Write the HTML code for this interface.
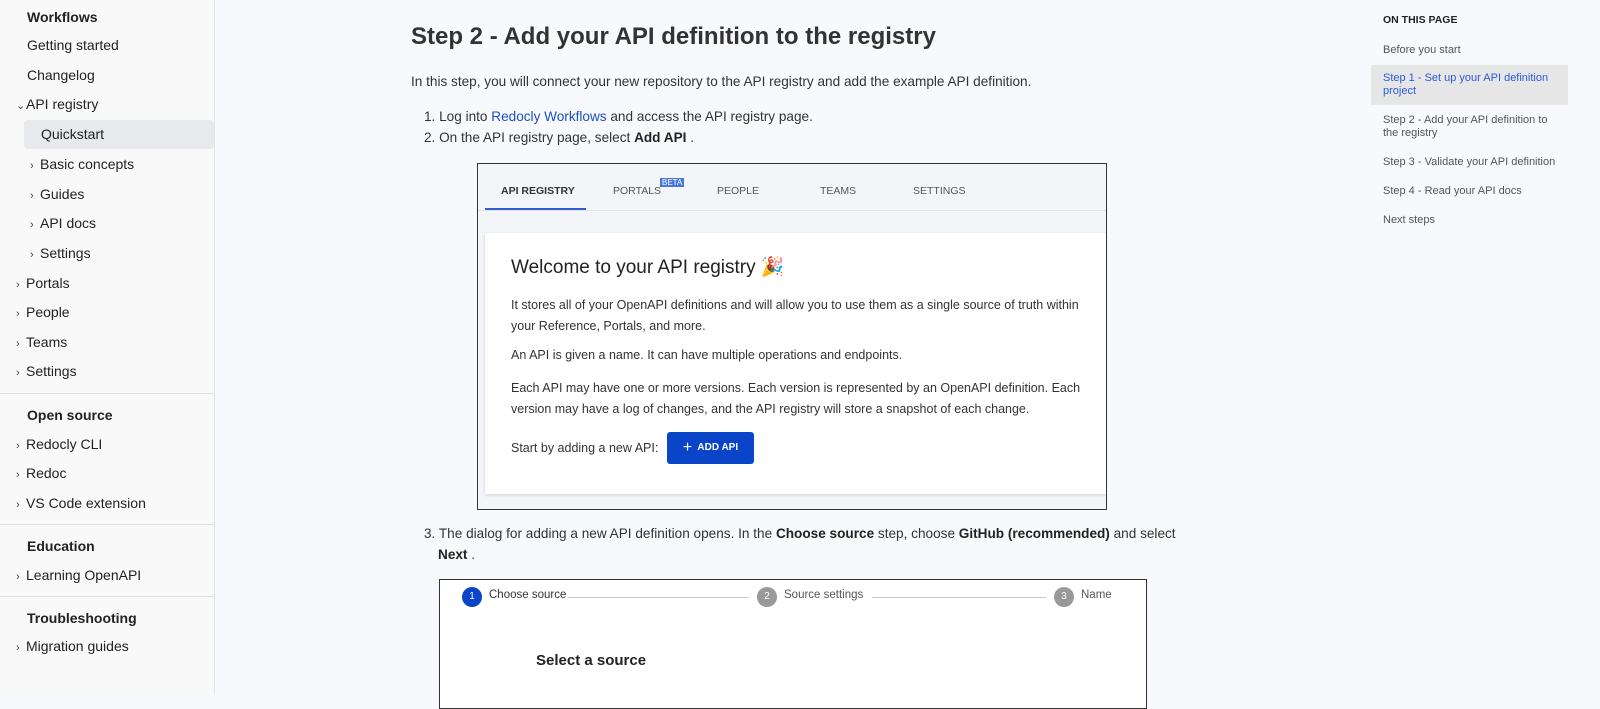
<!DOCTYPE html>
<html><head><meta charset="utf-8"><style>
*{margin:0;padding:0;box-sizing:border-box}
body{width:1600px;height:695px;overflow:hidden;background:#f8f9fc;font-family:"Liberation Sans",sans-serif;color:#1f1f1f;position:relative}
.side{position:absolute;left:0;top:0;width:215px;height:695px;background:#f9f9f9;border-right:1px solid #e4e4e4}
.side div{position:absolute;font-size:14px;color:#222;white-space:nowrap}
.side .h{font-weight:bold;left:27px}
.side .hr{position:absolute;left:0;width:214px;height:1px;background:#e0e0e0}
.ch{font-size:11px;color:#444;display:inline-block;width:10px}
.a{position:absolute;white-space:nowrap;font-size:13.6px;color:#333}
b{color:#222}
.toc div{position:absolute;left:1383px;font-size:11px;color:#555;line-height:13px}
</style></head><body>
<div class="side">
<div class="h" style="top:9px">Workflows</div>
<div style="left:27px;top:37px">Getting started</div>
<div style="left:27px;top:67px">Changelog</div>
<div style="left:16px;top:96px"><span class="ch">⌄</span>API registry</div>
<div style="left:24px;top:120px;width:190px;height:29px;background:#e8e9ec;border-radius:4px"></div>
<div style="left:41px;top:126px">Quickstart</div>
<div style="left:30px;top:156px"><span class="ch">›</span>Basic concepts</div>
<div style="left:30px;top:186px"><span class="ch">›</span>Guides</div>
<div style="left:30px;top:215px"><span class="ch">›</span>API docs</div>
<div style="left:30px;top:245px"><span class="ch">›</span>Settings</div>
<div style="left:16px;top:275px"><span class="ch">›</span>Portals</div>
<div style="left:16px;top:304px"><span class="ch">›</span>People</div>
<div style="left:16px;top:334px"><span class="ch">›</span>Teams</div>
<div style="left:16px;top:363px"><span class="ch">›</span>Settings</div>
<div class="hr" style="top:393px"></div>
<div class="h" style="top:407px">Open source</div>
<div style="left:16px;top:436px"><span class="ch">›</span>Redocly CLI</div>
<div style="left:16px;top:465px"><span class="ch">›</span>Redoc</div>
<div style="left:16px;top:495px"><span class="ch">›</span>VS Code extension</div>
<div class="hr" style="top:524px"></div>
<div class="h" style="top:538px">Education</div>
<div style="left:16px;top:567px"><span class="ch">›</span>Learning OpenAPI</div>
<div class="hr" style="top:596px"></div>
<div class="h" style="top:610px">Troubleshooting</div>
<div style="left:16px;top:638px"><span class="ch">›</span>Migration guides</div>
</div>

<div class="a" style="left:411px;top:23px;font-size:24px;font-weight:bold;color:#333">Step 2 - Add your API definition to the registry</div>
<div class="a" style="left:411px;top:74px">In this step, you will connect your new repository to the API registry and add the example API definition.</div>
<div class="a" style="left:424px;top:109px">1. Log into <span style="color:#1a4fc4">Redocly Workflows</span> and access the API registry page.</div>
<div class="a" style="left:424px;top:130px">2. On the API registry page, select <b>Add API</b> .</div>

<div style="position:absolute;left:477px;top:163px;width:630px;height:347px;border:1px solid #333;background:#f4f5f8;overflow:hidden">
 <div style="position:absolute;left:0;top:46px;width:630px;height:1px;background:#e2e4e8"></div>
 <div style="position:absolute;left:7px;top:44px;width:101px;height:2px;background:#2f5fd0"></div>
 <div style="position:absolute;top:21px;left:23px;font-size:10.5px;font-weight:bold;color:#333">API REGISTRY</div>
 <div style="position:absolute;top:21px;left:135px;font-size:10.5px;color:#555">PORTALS</div>
 <div style="position:absolute;top:14px;left:182px;font-size:8px;color:#fff;background:#4a78d8;padding:0 2px">BETA</div>
 <div style="position:absolute;top:21px;left:239px;font-size:10.5px;color:#555">PEOPLE</div>
 <div style="position:absolute;top:21px;left:342px;font-size:10.5px;color:#555">TEAMS</div>
 <div style="position:absolute;top:21px;left:435px;font-size:10.5px;color:#555">SETTINGS</div>
 <div style="position:absolute;left:7px;top:69px;width:622px;height:261px;background:#fff;box-shadow:0 1px 3px rgba(0,0,0,.15)">
  <div style="position:absolute;left:26px;top:22px;font-size:19px;color:#222">Welcome to your API registry 🎉</div>
  <div style="position:absolute;left:26px;top:62px;width:590px;font-size:12.5px;line-height:21px;color:#333">It stores all of your OpenAPI definitions and will allow you to use them as a single source of truth within your Reference, Portals, and more.</div>
  <div style="position:absolute;left:26px;top:115px;font-size:12.5px;color:#333">An API is given a name. It can have multiple operations and endpoints.</div>
  <div style="position:absolute;left:26px;top:145px;width:590px;font-size:12.5px;line-height:21px;color:#333">Each API may have one or more versions. Each version is represented by an OpenAPI definition. Each version may have a log of changes, and the API registry will store a snapshot of each change.</div>
  <div style="position:absolute;left:26px;top:208px;font-size:12.5px;color:#333">Start by adding a new API:</div>
  <div style="position:absolute;left:182px;top:199px;width:87px;height:32px;background:#0a44c8;border-radius:3px;color:#fff;font-size:10px;font-weight:bold;line-height:32px;text-align:center"><span style="font-size:16px;vertical-align:-2px;font-weight:normal">+</span>&nbsp; ADD API</div>
 </div>
</div>

<div class="a" style="left:424px;top:526px">3. The dialog for adding a new API definition opens. In the <b>Choose source</b> step, choose <b>GitHub (recommended)</b> and select</div>
<div class="a" style="left:438px;top:547px"><b>Next</b> .</div>

<div style="position:absolute;left:439px;top:579px;width:708px;height:130px;border:1px solid #333;background:#fff">
 <div style="position:absolute;left:22px;top:7px;width:20px;height:20px;border-radius:50%;background:#0a44c8;color:#fff;font-size:10px;text-align:center;line-height:20px">1</div>
 <div style="position:absolute;left:49px;top:9px;font-size:11.5px;color:#333">Choose source</div>
 <div style="position:absolute;left:128px;top:17px;width:181px;height:1px;background:#ccc"></div>
 <div style="position:absolute;left:317px;top:7px;width:20px;height:20px;border-radius:50%;background:#999;color:#fff;font-size:10px;text-align:center;line-height:20px">2</div>
 <div style="position:absolute;left:344px;top:9px;font-size:11.5px;color:#555">Source settings</div>
 <div style="position:absolute;left:432px;top:17px;width:174px;height:1px;background:#ccc"></div>
 <div style="position:absolute;left:614px;top:7px;width:20px;height:20px;border-radius:50%;background:#999;color:#fff;font-size:10px;text-align:center;line-height:20px">3</div>
 <div style="position:absolute;left:641px;top:9px;font-size:11.5px;color:#555">Name</div>
 <div style="position:absolute;left:96px;top:72px;font-size:15px;color:#222;font-weight:bold">Select a source</div>
</div>

<div class="toc">
<div style="top:14px;font-weight:bold;color:#222;font-size:10.5px">ON THIS PAGE</div>
<div style="top:44px">Before you start</div>
<div style="left:1371px;top:65px;width:197px;height:40px;background:#e6e6e6;position:absolute"></div>
<div style="top:72px;color:#2a5bd7;width:170px">Step 1 - Set up your API definition project</div>
<div style="top:114px;width:170px">Step 2 - Add your API definition to the registry</div>
<div style="top:156px">Step 3 - Validate your API definition</div>
<div style="top:185px">Step 4 - Read your API docs</div>
<div style="top:214px">Next steps</div>
</div>
</body></html>
